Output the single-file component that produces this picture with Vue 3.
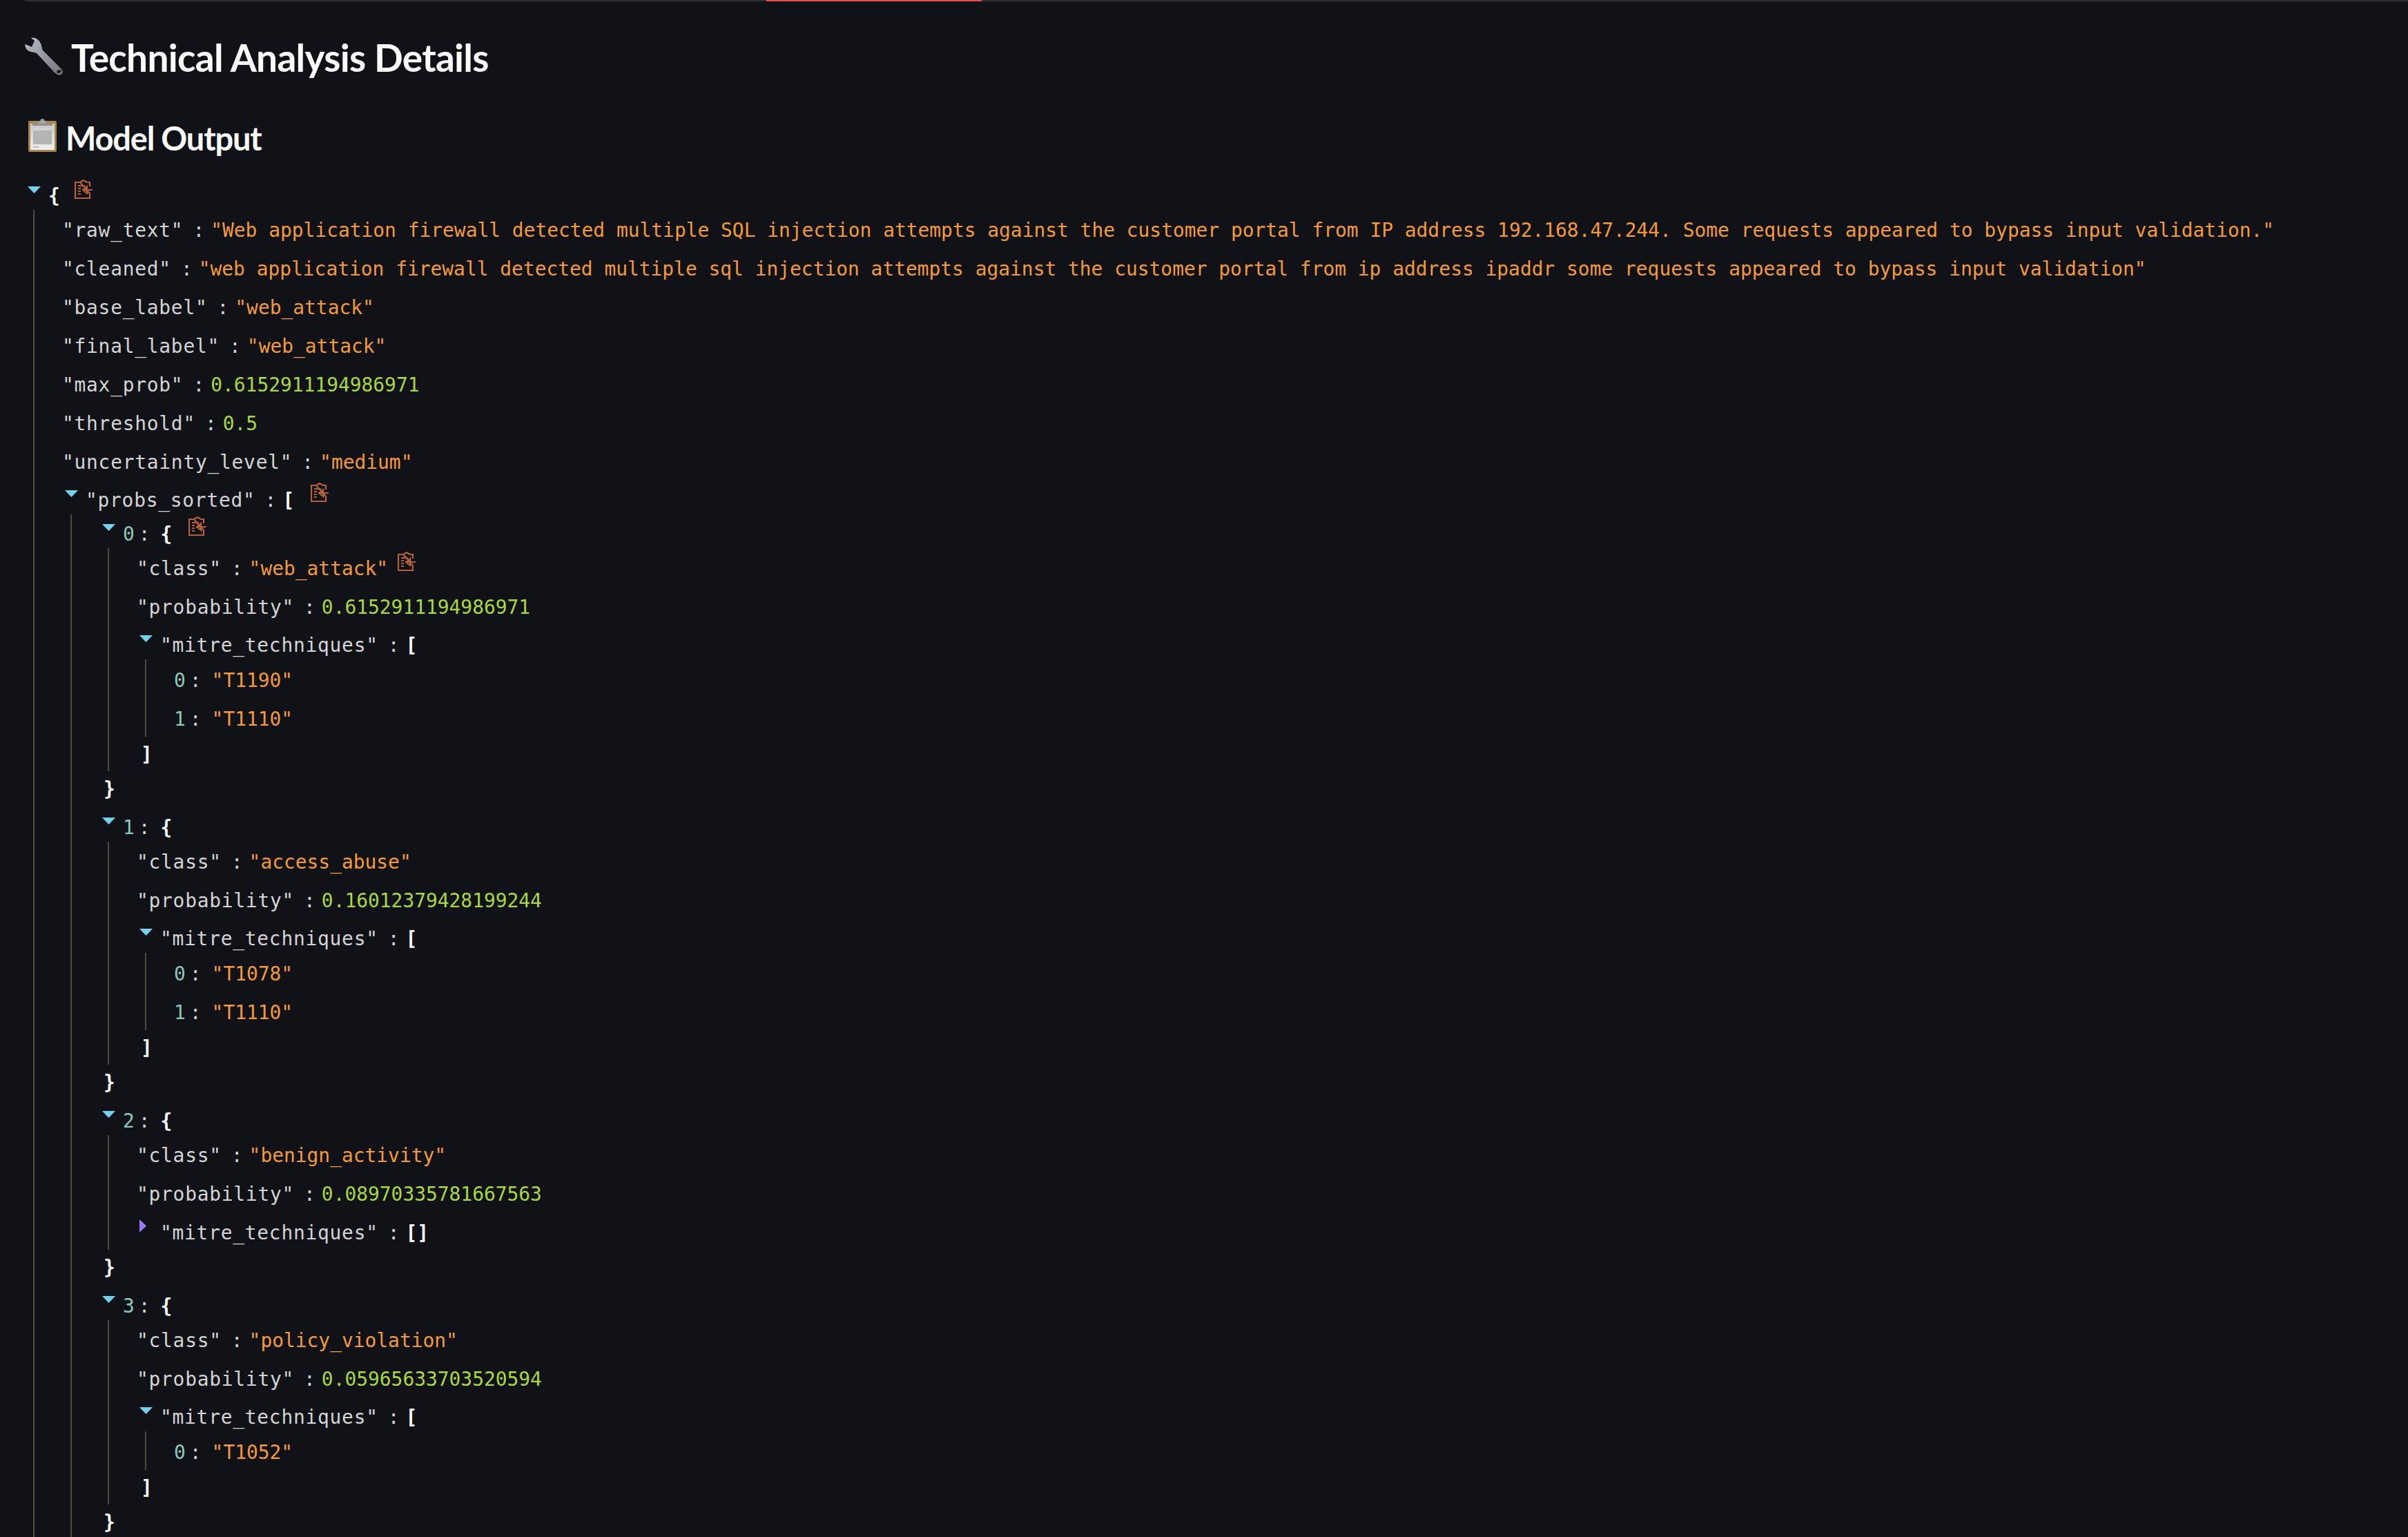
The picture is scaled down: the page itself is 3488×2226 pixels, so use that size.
<script setup>
const topFields = [
  { key: 'raw_text', value: '"Web application firewall detected multiple SQL injection attempts against the customer portal from IP address 192.168.47.244. Some requests appeared to bypass input validation."', type: 'str' },
  { key: 'cleaned', value: '"web application firewall detected multiple sql injection attempts against the customer portal from ip address ipaddr some requests appeared to bypass input validation"', type: 'str' },
  { key: 'base_label', value: '"web_attack"', type: 'str' },
  { key: 'final_label', value: '"web_attack"', type: 'str' },
  { key: 'max_prob', value: '0.6152911194986971', type: 'num' },
  { key: 'threshold', value: '0.5', type: 'num' },
  { key: 'uncertainty_level', value: '"medium"', type: 'str' }
]
const probs = [
  { cls: 'web_attack', p: '0.6152911194986971', mitre: ['T1190', 'T1110'] },
  { cls: 'access_abuse', p: '0.16012379428199244', mitre: ['T1078', 'T1110'] },
  { cls: 'benign_activity', p: '0.08970335781667563', mitre: [] },
  { cls: 'policy_violation', p: '0.05965633703520594', mitre: ['T1052'] }
]
</script>

<template>
  <div class="page">
    <div class="topbar"><div class="topbar-red"></div></div>

    <h3 class="title">
      <svg class="wrench" viewBox="0 0 56 56" width="56" height="56">
        <defs>
          <linearGradient id="wr" x1="0" y1="0" x2="1" y2="1">
            <stop offset="0" stop-color="#b4bcc6" />
            <stop offset="1" stop-color="#77737a" />
          </linearGradient>
        </defs>
        <path d="M0.500 10 L10 14 L14 5 L9 1 C15 -1 21 4 23 9 C25 13 24 16 26 19 L53 46 C57 50 54 55 49 54.500 C46 54 44 52 42 50 L17 23 C13 21 7 22 3 18 C1 15 0 13 0.500 10 Z" fill="url(#wr)" />
        <ellipse cx="49.500" cy="49.500" rx="3.500" ry="2" fill="#101217" transform="rotate(-20 49.500 49.500)" />
      </svg>
      <span>Technical Analysis Details</span>
    </h3>

    <h4 class="subtitle">
      <svg class="board" viewBox="0 0 41 48" width="41" height="48">
        <defs>
          <linearGradient id="pp" x1="0" y1="0" x2="0" y2="1">
            <stop offset="0" stop-color="#c9c9c9" />
            <stop offset="1" stop-color="#f0f0f0" />
          </linearGradient>
        </defs>
        <rect x="0" y="3" width="41" height="45" rx="2" fill="#a8874f" />
        <rect x="3" y="7" width="35" height="38" fill="url(#pp)" />
        <rect x="7" y="17" width="27" height="20" fill="#b4b4b4" />
        <rect x="7" y="40" width="8" height="2" fill="#bcbcbc" />
        <path d="M6 7 H35 V10 H6 Z" fill="#8f8f8f" />
        <circle cx="20.500" cy="3" r="3" fill="#a3a6aa" />
        <path d="M13 7 L17 3 H24 L28 7 Z" fill="#a3a6aa" />
      </svg>
      <span>Model Output</span>
    </h4>

    <div class="row exp root-row">
      <i class="tri"></i>
      <span class="brace">{</span>
      <svg class="copy" viewBox="0 0 26 28" width="26" height="28"><path d="M8 4 L13 1 L18 4 H22 V10 M22 20 V27 H1 V4 H8 Z M5 9 H15 M5 13 H9 M5 17 H9 M5 21 H9 M13 15 H26 M18 10 L12 15 L18 20 Z" fill="none" stroke="#b5603a" stroke-width="2.200" /></svg>
    </div>
    <div class="block root-block">
      <div v-for="f in topFields" :key="f.key" class="row leaf">
        <span class="key">"{{ f.key }}"</span><span class="colon">:</span><span :class="f.type">{{ f.value }}</span>
      </div>
      <div class="row exp">
        <i class="tri"></i>
        <span class="key">"probs_sorted"</span><span class="colon">:</span><span class="brace">[</span>
        <svg class="copy" viewBox="0 0 26 28" width="26" height="28"><path d="M8 4 L13 1 L18 4 H22 V10 M22 20 V27 H1 V4 H8 Z M5 9 H15 M5 13 H9 M5 17 H9 M5 21 H9 M13 15 H26 M18 10 L12 15 L18 20 Z" fill="none" stroke="#b5603a" stroke-width="2.200" /></svg>
      </div>
      <div class="block">
        <template v-for="(item, i) in probs" :key="i">
          <div class="row exp">
            <i class="tri"></i>
            <span class="idx">{{ i }}</span><span class="colon colon-idx">:</span><span class="brace">{</span>
            <svg v-if="i === 0" class="copy" viewBox="0 0 26 28" width="26" height="28"><path d="M8 4 L13 1 L18 4 H22 V10 M22 20 V27 H1 V4 H8 Z M5 9 H15 M5 13 H9 M5 17 H9 M5 21 H9 M13 15 H26 M18 10 L12 15 L18 20 Z" fill="none" stroke="#b5603a" stroke-width="2.200" /></svg>
          </div>
          <div class="block">
            <div class="row leaf">
              <span class="key">"class"</span><span class="colon">:</span><span class="str">"{{ item.cls }}"</span>
              <svg v-if="i === 0" class="copy copy-leaf" viewBox="0 0 26 28" width="26" height="28"><path d="M8 4 L13 1 L18 4 H22 V10 M22 20 V27 H1 V4 H8 Z M5 9 H15 M5 13 H9 M5 17 H9 M5 21 H9 M13 15 H26 M18 10 L12 15 L18 20 Z" fill="none" stroke="#b5603a" stroke-width="2.200" /></svg>
            </div>
            <div class="row leaf">
              <span class="key">"probability"</span><span class="colon">:</span><span class="num">{{ item.p }}</span>
            </div>
            <template v-if="item.mitre.length">
              <div class="row exp">
                <i class="tri"></i>
                <span class="key">"mitre_techniques"</span><span class="colon">:</span><span class="brace">[</span>
              </div>
              <div class="block">
                <div v-for="(m, j) in item.mitre" :key="j" class="row leaf leaf-idx">
                  <span class="idx">{{ j }}</span><span class="colon colon-idx">:</span><span class="str">"{{ m }}"</span>
                </div>
              </div>
              <div class="row close close-inner"><span class="brace">]</span></div>
            </template>
            <div v-else class="row collapsed">
              <i class="tri-right"></i>
              <span class="key">"mitre_techniques"</span><span class="colon">:</span><span class="brace">[]</span>
            </div>
          </div>
          <div class="row close"><span class="brace">}</span></div>
        </template>
        <div class="tail"></div>
      </div>
    </div>
  </div>
</template>

<style scoped>
.page {
  height: 2226px;
  overflow: hidden;
  background: #101217;
  color: #fff;
  padding-left: 36px;
  box-sizing: border-box;
  font-family: "DejaVu Sans Mono", monospace;
  font-size: 27.9px;
}
.topbar {
  height: 2px;
  background: #2d2f37;
  position: relative;
}
.topbar-red {
  position: absolute;
  left: 1074px;
  width: 312px;
  top: 0;
  height: 2px;
  background: #ee4d4d;
}
.title, .subtitle {
  margin: 0;
  display: flex;
  font-family: "Lato", sans-serif;
  font-weight: 700;
  color: #fafafa;
  align-items: flex-start;
  white-space: nowrap;
}
.title {
  font-size: 55px;
  letter-spacing: -0.72px;
  padding-top: 48px;
  line-height: 66px;
  height: 68px;
}
.subtitle {
  font-size: 47px;
  letter-spacing: -1.2px;
  margin-top: 50px;
  padding-top: 4px;
  height: 80px;
  line-height: 56px;
}
.wrench {
  margin-top: 4px;
  margin-right: 11px;
  flex: none;
}
.board {
  margin: 0 13px 0 5px;
  flex: none;
}
.row {
  display: flex;
  white-space: pre;
  box-sizing: border-box;
}
.leaf {
  height: 56px;
  line-height: 60px;
  padding-left: 40px;
}
.leaf-idx {
  line-height: 62px;
}
.exp {
  height: 49px;
  line-height: 58px;
  padding-left: 44px;
}
.root-row {
  padding-left: 4px;
  height: 52px;
  line-height: 64px;
}
.root-row .tri {
  margin-top: 18px;
}
.root-row .copy {
  margin: 8px 0 0 21px;
}
.collapsed {
  height: 54px;
  line-height: 60px;
  padding-left: 44px;
}
.close {
  height: 53px;
  line-height: 52px;
  padding-left: 46px;
}
.close-inner {
  height: 50px;
}
.block {
  margin-left: 52px;
  border-left: 2px solid #4d4b45;
}
.root-block {
  margin-left: 12px;
}
.tail {
  height: 80px;
}
.tri {
  flex: none;
  width: 19px;
  height: 10px;
  margin: 14px 11px 0 0;
  background: #74d2ee;
  clip-path: polygon(0 0, 100% 0, 50% 100%);
}
.tri-right {
  flex: none;
  width: 10px;
  height: 19px;
  margin: 10px 20px 0 0;
  background: #9c78f5;
  clip-path: polygon(0 0, 100% 50%, 0 100%);
}
.key {
  color: #d4d4d4;
  letter-spacing: 0.75px;
}
.colon {
  color: #d4d4d4;
  margin: 0 9px 0 14px;
}
.colon-idx {
  margin: 0 15px 0 6px;
}
.str {
  color: #f59a3c;
}
.num {
  color: #a8d843;
}
.idx {
  color: #8ccabf;
}
.brace {
  color: #fafafa;
  font-weight: 700;
}
.copy {
  flex: none;
  margin: 3px 0 0 24px;
}
.copy-leaf {
  margin: 5px 0 0 14px;
}
</style>

<style>
html, body {
  margin: 0;
  background: #101217;
}
</style>
